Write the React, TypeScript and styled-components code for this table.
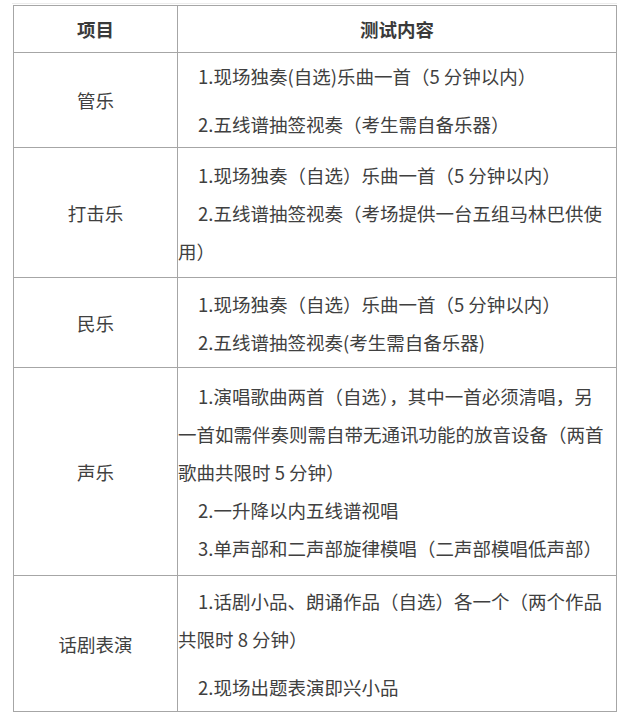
import React from "react";
import styled, { createGlobalStyle } from "styled-components";

const GlobalStyle = createGlobalStyle`
  html, body {
    margin: 0;
    padding: 0;
    background: #ffffff;
  }
  body {
    font-family: "Noto Sans CJK SC", "Noto Sans", sans-serif;
    color: #404040;
  }
`;

const Page = styled.div`
  padding: 3px 0 0 12px;
`;

const Frame = styled.div`
  width: 605px;
  border-top: 1px solid #ececec;
  padding-top: 1px;
`;

const Table = styled.table`
  margin-left: 1px;
  width: 604px;
  border-collapse: collapse;
  table-layout: fixed;
  font-size: 18.5px;
`;

const Row = styled.tr<{ $h: number }>`
  height: ${(p) => p.$h}px;
`;

const HeadCell = styled.th`
  border: 1px solid #a6a6a6;
  padding: 0;
  font-weight: 700;
  color: #3a3a3a;
  text-align: center;
  vertical-align: middle;
  line-height: 38px;
`;

const NameCell = styled.td`
  border: 1px solid #a6a6a6;
  padding: 0;
  text-align: center;
  vertical-align: middle;
  line-height: 38px;
`;

const ContentCell = styled.td`
  border: 1px solid #a6a6a6;
  padding: 0 8px 0 0;
  text-align: left;
  vertical-align: middle;
`;

const Para = styled.p<{ $gap: number }>`
  margin: 0;
  line-height: 38px;
  text-indent: 20px;
  &:not(:first-child) {
    margin-top: ${(p) => p.$gap}px;
  }
`;

type Item = { name: string; h: number; gap: number; lines: string[] };

const items: Item[] = [
  {
    name: "管乐",
    h: 95,
    gap: 10,
    lines: ["1.现场独奏(自选)乐曲一首（5 分钟以内）", "2.五线谱抽签视奏（考生需自备乐器）"],
  },
  {
    name: "打击乐",
    h: 130,
    gap: 0,
    lines: [
      "1.现场独奏（自选）乐曲一首（5 分钟以内）",
      "2.五线谱抽签视奏（考场提供一台五组马林巴供使用）",
    ],
  },
  {
    name: "民乐",
    h: 90,
    gap: 0,
    lines: ["1.现场独奏（自选）乐曲一首（5 分钟以内）", "2.五线谱抽签视奏(考生需自备乐器)"],
  },
  {
    name: "声乐",
    h: 208,
    gap: 0,
    lines: [
      "1.演唱歌曲两首（自选），其中一首必须清唱，另一首如需伴奏则需自带无通讯功能的放音设备（两首歌曲共限时 5 分钟）",
      "2.一升降以内五线谱视唱",
      "3.单声部和二声部旋律模唱（二声部模唱低声部）",
    ],
  },
  {
    name: "话剧表演",
    h: 136,
    gap: 10,
    lines: ["1.话剧小品、朗诵作品（自选）各一个（两个作品共限时 8 分钟）", "2.现场出题表演即兴小品"],
  },
];

export default function App() {
  return (
    <>
      <GlobalStyle />
      <Page>
        <Frame>
          <Table>
            <colgroup>
              <col style={{ width: 164 }} />
              <col />
            </colgroup>
            <thead>
              <Row $h={47}>
                <HeadCell>项目</HeadCell>
                <HeadCell>测试内容</HeadCell>
              </Row>
            </thead>
            <tbody>
              {items.map((it) => (
                <Row key={it.name} $h={it.h}>
                  <NameCell>{it.name}</NameCell>
                  <ContentCell>
                    {it.lines.map((l) => (
                      <Para key={l} $gap={it.gap}>
                        {l}
                      </Para>
                    ))}
                  </ContentCell>
                </Row>
              ))}
            </tbody>
          </Table>
        </Frame>
      </Page>
    </>
  );
}
